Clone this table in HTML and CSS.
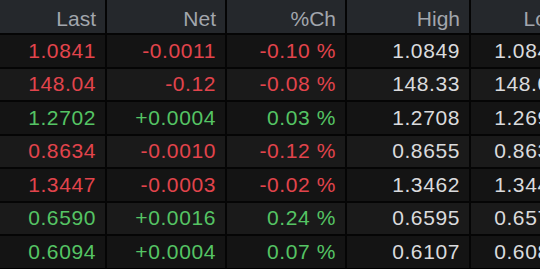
FILE: index.html
```html
<!DOCTYPE html>
<html>
<head>
<meta charset="utf-8">
<link rel="stylesheet" href="styles.css">
</head>
<body>
<div class="grid">
  <div class="cell head">Last</div>
  <div class="cell head">Net</div>
  <div class="cell head">%Ch</div>
  <div class="cell head">High</div>
  <div class="cell head low">Low</div>

  <div class="cell odd dn">1.0841</div>
  <div class="cell odd dn">-0.0011</div>
  <div class="cell odd dn">-0.10 %</div>
  <div class="cell odd nt">1.0849</div>
  <div class="cell odd nt low">1.0840</div>

  <div class="cell even dn">148.04</div>
  <div class="cell even dn">-0.12</div>
  <div class="cell even dn">-0.08 %</div>
  <div class="cell even nt">148.33</div>
  <div class="cell even nt low">148.01</div>

  <div class="cell odd up">1.2702</div>
  <div class="cell odd up">+0.0004</div>
  <div class="cell odd up">0.03 %</div>
  <div class="cell odd nt">1.2708</div>
  <div class="cell odd nt low">1.2697</div>

  <div class="cell even dn">0.8634</div>
  <div class="cell even dn">-0.0010</div>
  <div class="cell even dn">-0.12 %</div>
  <div class="cell even nt">0.8655</div>
  <div class="cell even nt low">0.8630</div>

  <div class="cell odd dn">1.3447</div>
  <div class="cell odd dn">-0.0003</div>
  <div class="cell odd dn">-0.02 %</div>
  <div class="cell odd nt">1.3462</div>
  <div class="cell odd nt low">1.3441</div>

  <div class="cell even up">0.6590</div>
  <div class="cell even up">+0.0016</div>
  <div class="cell even up">0.24 %</div>
  <div class="cell even nt">0.6595</div>
  <div class="cell even nt low">0.6572</div>

  <div class="cell odd up">0.6094</div>
  <div class="cell odd up">+0.0004</div>
  <div class="cell odd up">0.07 %</div>
  <div class="cell odd nt">0.6107</div>
  <div class="cell odd nt low">0.6085</div>
</div>
</body>
</html>
```

FILE: styles.css
```css
html, body {
  margin: 0;
  padding: 0;
  background: #000;
  overflow: hidden;
}
body {
  width: 540px;
  height: 269px;
  font-family: "Liberation Sans", Arial, sans-serif;
}
.grid {
  display: grid;
  grid-template-columns: 105px 118px 118px 122px 101px;
  grid-template-rows: 33px repeat(7, 31.5px);
  column-gap: 2px;
  row-gap: 2px;
  background: #050505;
  width: 572px;
}
.cell {
  font-size: 21px;
  letter-spacing: 0.6px;
  padding-right: 9px;
  display: flex;
  align-items: center;
  justify-content: flex-end;
  white-space: nowrap;
}
.low {
  padding-right: 10px;
}
.head {
  background: #25282c;
  color: #a2a6ad;
  letter-spacing: 0;
  padding-top: 4px;
}
.odd {
  background: #141414;
}
.even {
  background: #1a1a1a;
}
.dn {
  color: #e2444c;
}
.up {
  color: #55c464;
}
.nt {
  color: #dadbdd;
}
```
